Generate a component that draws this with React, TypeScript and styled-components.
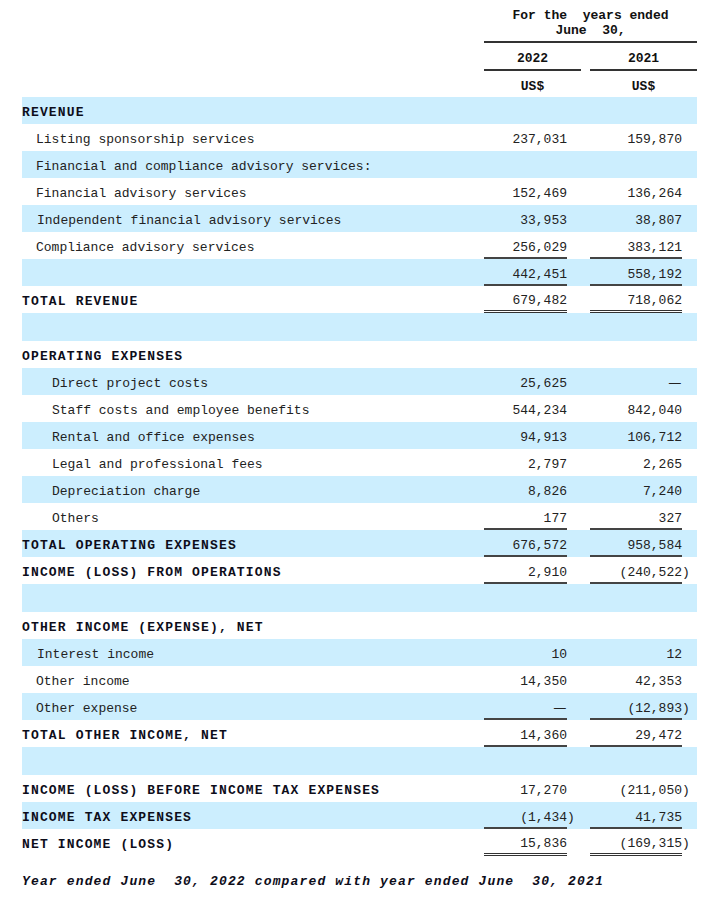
import React from "react";
import styled, { createGlobalStyle, css } from "styled-components";

const Global = createGlobalStyle`
  html, body { margin: 0; padding: 0; background: #ffffff; }
  body { font-family: "Liberation Mono", "DejaVu Sans Mono", monospace; color: #1a1a1a; }
`;

const FONT = `"Liberation Mono", "DejaVu Sans Mono", monospace`;
const BAND = "#cceefe";
const COLS = "462px 83px 14px 9px 92px 15px";

const Page = styled.div`
  width: 675px;
  padding: 7px 9px 0 22px;
  font-family: ${FONT};
  font-size: 13px;
`;

const HeadGrid = styled.div`
  display: grid;
  grid-template-columns: ${COLS};
  font-weight: bold;
  color: #111;
`;

const Title = styled.div`
  grid-column: 2 / 7;
  text-align: center;
  line-height: 15px;
  padding-top: 1px;
  padding-bottom: 3px;
  border-bottom: 2px solid #333;
  white-space: pre;
`;

const HeadCell = styled.div<{ $col: number; $rule?: boolean }>`
  grid-column: ${(p) => (p.$col === 1 ? "2 / 4" : "5 / 7")};
  display: flex;
  align-items: center;
  justify-content: center;
  height: 21px;
  padding-top: 5px;
  ${(p) =>
    p.$rule &&
    css`
      border-bottom: 2px solid #333;
    `}
`;

const Row = styled.div<{ $band: boolean; $h: number }>`
  display: grid;
  grid-template-columns: ${COLS};
  height: ${(p) => p.$h}px;
  background: ${(p) => (p.$band ? BAND : "transparent")};
`;

const Label = styled.div<{ $bold: boolean; $indent: number }>`
  padding-left: ${(p) => p.$indent}px;
  padding-top: 4px;
  display: flex;
  align-items: center;
  white-space: pre;
  ${(p) =>
    p.$bold
      ? css`
          font-weight: bold;
          letter-spacing: 1.15px;
          color: #0d0d1a;
        `
      : css`
          color: #222;
        `}
`;

const Num = styled.div<{ $col: number; $line?: "single" | "double" }>`
  grid-column: ${(p) => (p.$col === 1 ? 2 : 5)};
  box-sizing: border-box;
  padding-top: ${(p) => (p.$line ? 5 : 4)}px;
  display: flex;
  align-items: center;
  justify-content: flex-end;
  color: #222;
  white-space: pre;
  ${(p) =>
    p.$line === "single" &&
    css`
      border-bottom: 2px solid #444;
    `}
  ${(p) =>
    p.$line === "double" &&
    css`
      border-bottom: 3px double #333;
    `}
`;

const Neg = styled.span`
  margin-right: -1ch;
`;

const Dash = styled.span`
  display: inline-block;
  transform: scaleX(1.5);
  transform-origin: right center;
  margin-right: 1px;
`;

const Footer = styled.div`
  margin-top: 12px;
  height: 27px;
  line-height: 27px;
  font-weight: bold;
  font-style: italic;
  letter-spacing: 1.15px;
  color: #0d0d1a;
  white-space: pre;
`;

type Line = "single" | "double";
type R = {
  label?: string;
  bold?: boolean;
  indent?: number;
  a?: string;
  b?: string;
  line?: Line;
  h?: number;
};

const rows: R[] = [
  { label: "REVENUE", bold: true },
  { label: "Listing sponsorship services", indent: 14, a: "237,031", b: "159,870" },
  { label: "Financial and compliance advisory services:", indent: 14 },
  { label: "Financial advisory services", indent: 14, a: "152,469", b: "136,264" },
  { label: "Independent financial advisory services", indent: 15, a: "33,953", b: "38,807" },
  { label: "Compliance advisory services", indent: 14, a: "256,029", b: "383,121", line: "single" },
  { label: "", a: "442,451", b: "558,192", line: "single" },
  { label: "TOTAL REVENUE", bold: true, a: "679,482", b: "718,062", line: "double" },
  { label: "", h: 28 },
  { label: "OPERATING EXPENSES", bold: true },
  { label: "Direct project costs", indent: 30, a: "25,625", b: "—" },
  { label: "Staff costs and employee benefits", indent: 30, a: "544,234", b: "842,040" },
  { label: "Rental and office expenses", indent: 30, a: "94,913", b: "106,712" },
  { label: "Legal and professional fees", indent: 30, a: "2,797", b: "2,265" },
  { label: "Depreciation charge", indent: 30, a: "8,826", b: "7,240" },
  { label: "Others", indent: 30, a: "177", b: "327", line: "single" },
  { label: "TOTAL OPERATING EXPENSES", bold: true, a: "676,572", b: "958,584", line: "single" },
  { label: "INCOME (LOSS) FROM OPERATIONS", bold: true, a: "2,910", b: "(240,522)", line: "single" },
  { label: "", h: 28 },
  { label: "OTHER INCOME (EXPENSE), NET", bold: true },
  { label: "Interest income", indent: 15, a: "10", b: "12" },
  { label: "Other income", indent: 14, a: "14,350", b: "42,353" },
  { label: "Other expense", indent: 14, a: "—", b: "(12,893)", line: "single" },
  { label: "TOTAL OTHER INCOME, NET", bold: true, a: "14,360", b: "29,472", line: "single" },
  { label: "", h: 28 },
  { label: "INCOME (LOSS) BEFORE INCOME TAX EXPENSES", bold: true, a: "17,270", b: "(211,050)" },
  { label: "INCOME TAX EXPENSES", bold: true, a: "(1,434)", b: "41,735", line: "single" },
  { label: "NET INCOME (LOSS)", bold: true, a: "15,836", b: "(169,315)", line: "double" },
];

const Value: React.FC<{ v?: string }> = ({ v }) => {
  if (!v) return null;
  if (v === "—") return <Dash>{v}</Dash>;
  if (v.startsWith("(")) return <Neg>{v}</Neg>;
  return <>{v}</>;
};

export default function App() {
  return (
    <>
      <Global />
      <Page>
        <HeadGrid>
          <Title>{"For the  years ended\nJune  30,"}</Title>
          <HeadCell $col={1} $rule>2022</HeadCell>
          <HeadCell $col={2} $rule>2021</HeadCell>
          <HeadCell $col={1}>US$</HeadCell>
          <HeadCell $col={2}>US$</HeadCell>
        </HeadGrid>
        {rows.map((r, i) => (
          <Row key={i} $band={i % 2 === 0} $h={r.h ?? 27}>
            <Label $bold={!!r.bold} $indent={r.indent ?? 0}>
              {r.label}
            </Label>
            {(r.a || r.line) && (
              <Num $col={1} $line={r.line}>
                <Value v={r.a} />
              </Num>
            )}
            {(r.b || r.line) && (
              <Num $col={2} $line={r.line}>
                <Value v={r.b} />
              </Num>
            )}
          </Row>
        ))}
        <Footer>{"Year ended June  30, 2022 compared with year ended June  30, 2021"}</Footer>
      </Page>
    </>
  );
}
